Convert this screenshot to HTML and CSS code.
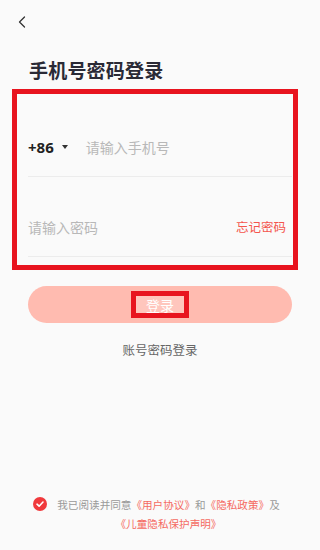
FILE: index.html
```html
<!DOCTYPE html>
<html lang="zh">
<head>
<meta charset="utf-8">
<link rel="stylesheet" href="styles.css">
</head>
<body>
<div class="page">
  <div class="topbar">
    <svg class="back" width="8" height="12" viewBox="0 0 8 12"><path d="M6.5 1 L1.5 6 L6.5 11" fill="none" stroke="#333" stroke-width="1.3" stroke-linecap="round" stroke-linejoin="round"/></svg>
  </div>
  <h1 class="title">手机号密码登录</h1>
  <div class="form">
    <div class="row">
      <span class="code">+86</span>
      <span class="caret"></span>
      <span class="ph">请输入手机号</span>
    </div>
    <div class="row">
      <span class="ph ph-pwd">请输入密码</span>
      <span class="forgot">忘记密码</span>
    </div>
    <div class="mark mark-form"></div>
  </div>
  <div class="btn">
    <span class="btn-text">登录</span>
    <span class="mark mark-btn"></span>
  </div>
  <div class="alt">账号密码登录</div>
  <div class="agree">
    <svg class="check" width="14" height="14" viewBox="0 0 14 14"><circle cx="7" cy="7" r="7" fill="#f0393c"/><path d="M4 7.2 L6.1 9.2 L10 5" fill="none" stroke="#fff" stroke-width="1.6" stroke-linecap="round" stroke-linejoin="round"/></svg>
    <p class="agree-text">我已阅读并同意<span class="link">《用户协议》</span>和<span class="link">《隐私政策》</span>及<br><span class="link">《儿童隐私保护声明》</span></p>
  </div>
</div>
</body>
</html>
```
FILE: styles.css
```css
html, body {
  margin: 0;
  padding: 0;
  background: #fafafa;
}
body {
  font-family: "Noto Sans CJK SC", "Noto Sans", sans-serif;
  color: #222;
}
.page {
  min-height: 550px;
  display: flex;
  flex-direction: column;
}
.topbar {
  height: 44px;
  padding-left: 18px;
  display: flex;
  align-items: flex-start;
}
.back {
  margin-top: 16px;
}
.title {
  margin: 13px 0 0 29px;
  font-size: 19px;
  line-height: 26px;
  font-weight: 700;
  color: #2a2a36;
  letter-spacing: 0.2px;
}
.form {
  position: relative;
  margin: 14px 28px 0 28px;
}
.row {
  margin-top: 20px;
  height: 60px;
  border-bottom: 1px solid #ececec;
  box-sizing: border-box;
  display: flex;
  align-items: center;
}
.code {
  font-size: 15px;
  font-weight: 700;
  color: #222;
  font-family: "Noto Sans", sans-serif;
}
.caret {
  width: 0;
  height: 0;
  border-left: 3.5px solid transparent;
  border-right: 3.5px solid transparent;
  border-top: 4px solid #333;
  margin-left: 8px;
  margin-right: 18px;
}
.ph {
  font-size: 14px;
  color: #b8b8b8;
}
.ph-pwd {
  flex: 1;
}
.forgot {
  font-size: 12.5px;
  color: #f4554d;
  margin-right: 6px;
}
.mark {
  position: absolute;
  border: 5px solid #e8141f;
  box-sizing: border-box;
  pointer-events: none;
}
.mark-form {
  left: -16px;
  right: -6px;
  top: -8px;
  bottom: -13px;
}
.btn {
  position: relative;
  margin: 29px 28px 0 28px;
  height: 37px;
  border-radius: 19px;
  background: #ffbbb0;
  display: flex;
  align-items: center;
  justify-content: center;
}
.btn-text {
  font-size: 14px;
  color: #fff;
  background: #ffc6bd;
  padding: 0 11px;
  line-height: 18px;
}
.mark-btn {
  left: 103px;
  width: 58px;
  top: 5px;
  height: 27px;
}
.alt {
  margin-top: 18px;
  text-align: center;
  font-size: 12.5px;
  line-height: 18px;
  color: #666;
}
.agree {
  margin-top: auto;
  padding: 0 35px 17px 33px;
  display: flex;
  align-items: flex-start;
}
.check {
  flex: none;
  margin-top: 2px;
}
.agree-text {
  flex: 1;
  margin: 0 0 0 5px;
  text-align: center;
  font-size: 10.6px;
  line-height: 19px;
  color: #999;
}
.link {
  color: #f56a62;
}
```
